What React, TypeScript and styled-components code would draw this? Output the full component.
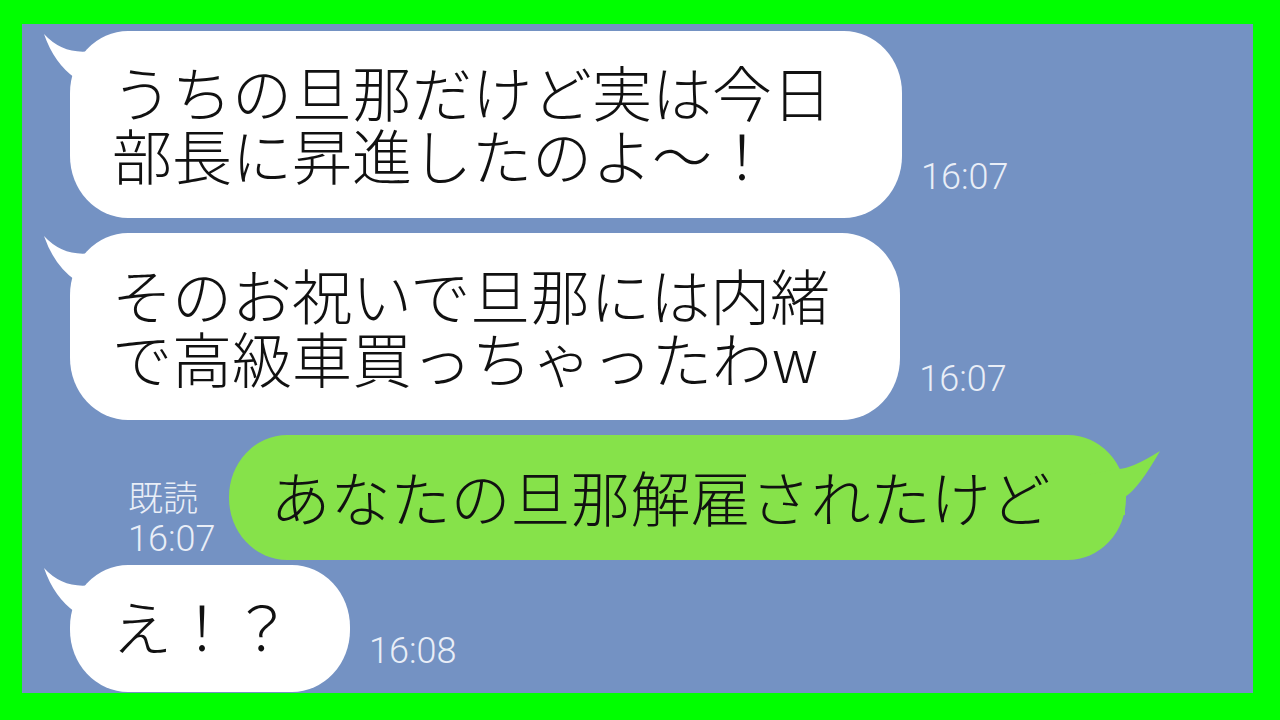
import React from "react";
import styled, { createGlobalStyle } from "styled-components";

const GlobalStyle = createGlobalStyle`
  html, body { margin: 0; padding: 0; }
  body { background: #00ff00; }
`;

const Frame = styled.div`
  width: 1280px;
  height: 720px;
  box-sizing: border-box;
  padding: 24px 27px 27px 22px;
  background: #00ff00;
`;

const Panel = styled.div`
  height: 100%;
  box-sizing: border-box;
  background: #7492c3;
  display: flex;
  flex-direction: column;
  padding: 7px 0 0 48px;
  overflow: hidden;
`;

const Row = styled.div<{ $gap: number; $indent?: number }>`
  display: flex;
  align-items: flex-end;
  margin-top: ${(p) => p.$gap}px;
  padding-left: ${(p) => p.$indent ?? 0}px;
`;

const Bubble = styled.div<{ $color: string; $pad: string }>`
  position: relative;
  background: ${(p) => p.$color};
  border-radius: 58px / 62px;
  padding: ${(p) => p.$pad};
  font-family: "Noto Sans CJK JP", "Noto Sans", sans-serif;
  font-weight: 300;
  font-size: 60px;
  line-height: 63px;
  color: #111;
  white-space: nowrap;
`;

const Line = styled.div`
  position: relative;
  z-index: 1;
  height: 63px;
`;

const TailSvg = styled.svg<{ $side: "left" | "right" }>`
  position: absolute;
  top: 0;
  width: 80px;
  height: 80px;
  z-index: 0;
  ${(p) =>
    p.$side === "left"
      ? "left: -40px;"
      : "right: -40px; transform: scaleX(-1);"}
`;

const Time = styled.div`
  font-family: Roboto, "Liberation Sans", sans-serif;
  font-weight: 300;
  font-size: 36px;
  line-height: 36px;
  color: #e9eef7;
  margin: 0 0 23px 19px;
`;

const ReadInfo = styled.div`
  display: flex;
  flex-direction: column;
  margin: 0 14px 3px 0;
  color: #e9eef7;
`;

const ReadMark = styled.span`
  font-family: "Noto Sans CJK JP", sans-serif;
  font-weight: 300;
  font-size: 35px;
  line-height: 40px;
`;

const ReadTime = styled.span`
  font-family: Roboto, "Liberation Sans", sans-serif;
  font-weight: 300;
  font-size: 36px;
  line-height: 36px;
  margin-top: 5px;
`;

const LEFT_TAIL = "M14 3 Q35 26 67 19 L80 30 L80 80 L46 80 L45 47 Q24 32 14 3 Z";
const GREEN_TAIL = "M6 16 Q36 35 50 34 L80 40 L80 80 L41 80 L41 62 Q27 53 6 16 Z";

const Tail: React.FC<{ side: "left" | "right"; color: string; d: string }> = ({ side, color, d }) => (
  <TailSvg $side={side} viewBox="0 0 80 80">
    <path d={d} fill={color} />
  </TailSvg>
);

const WHITE = "#ffffff";
const GREEN = "#86e24a";

export default function App() {
  return (
    <>
      <GlobalStyle />
      <Frame>
        <Panel>
          <Row $gap={0}>
            <Bubble $color={WHITE} $pad="28px 70px 33px 42px">
              <Tail side="left" color={WHITE} d={LEFT_TAIL} />
              <Line>うちの旦那だけど実は今日</Line>
              <Line>部長に昇進したのよ～！</Line>
            </Bubble>
            <Time>16:07</Time>
          </Row>
          <Row $gap={15}>
            <Bubble $color={WHITE} $pad="29px 70px 32px 42px">
              <Tail side="left" color={WHITE} d={LEFT_TAIL} />
              <Line>そのお祝いで旦那には内緒</Line>
              <Line>で高級車買っちゃったわw</Line>
            </Bubble>
            <Time>16:07</Time>
          </Row>
          <Row $gap={15} $indent={58}>
            <ReadInfo>
              <ReadMark>既読</ReadMark>
              <ReadTime>16:07</ReadTime>
            </ReadInfo>
            <Bubble $color={GREEN} $pad="29px 76px 33px 41px">
              <Tail side="right" color={GREEN} d={GREEN_TAIL} />
              <Line>あなたの旦那解雇されたけど</Line>
            </Bubble>
          </Row>
          <Row $gap={5}>
            <Bubble $color={WHITE} $pad="28px 58px 36px 42px">
              <Tail side="left" color={WHITE} d={LEFT_TAIL} />
              <Line>え！？</Line>
            </Bubble>
            <Time>16:08</Time>
          </Row>
        </Panel>
      </Frame>
    </>
  );
}
